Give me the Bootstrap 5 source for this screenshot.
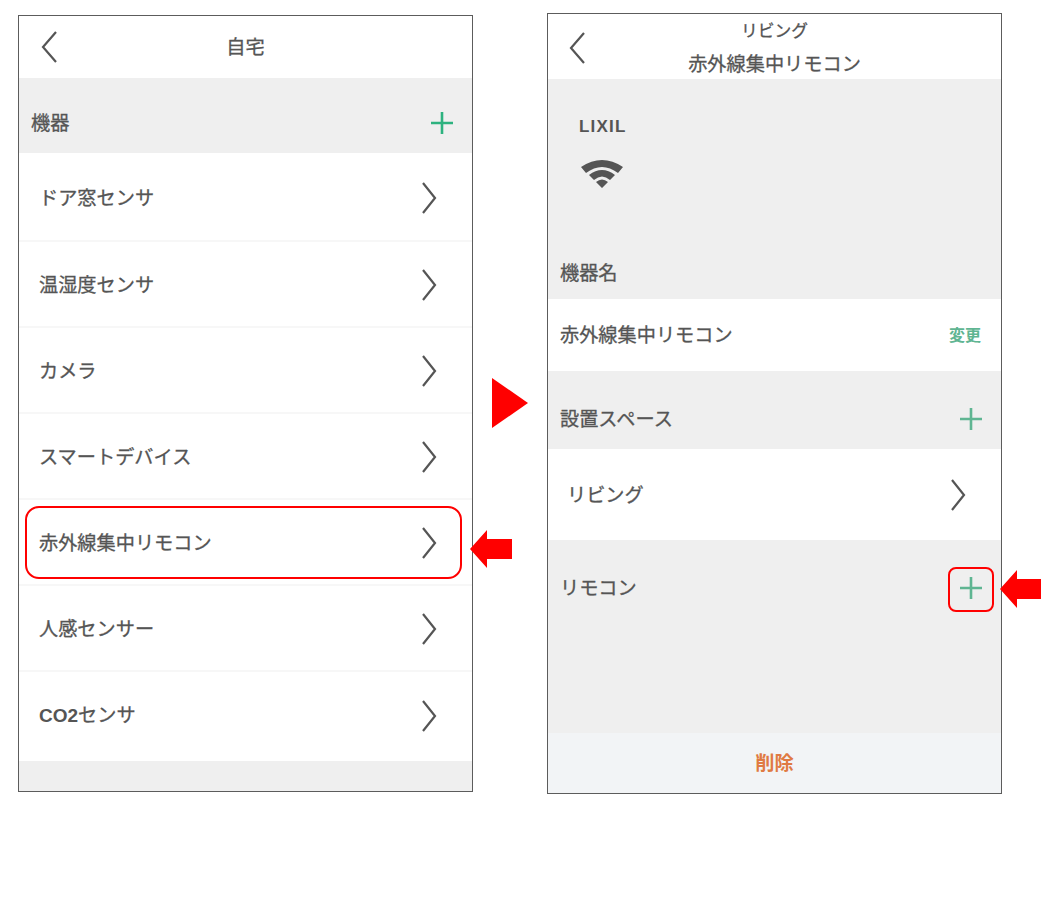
<!DOCTYPE html>
<html lang="ja">
<head>
<meta charset="utf-8">
<title>リモコン</title>
<link href="https://cdn.jsdelivr.net/npm/bootstrap@5.3.0/dist/css/bootstrap.min.css" rel="stylesheet">
<style>
html,body{height:906px;overflow:hidden;background:#fff}
body{font-family:"Noto Sans CJK JP","Liberation Sans",sans-serif;color:#555;font-size:19.2px;line-height:1.2;font-weight:400;-webkit-text-stroke:.3px #555}
.stage{position:relative;width:1058px;height:906px;align-items:flex-start}
.left-col{width:455px;height:777px;margin-top:15px;margin-left:18px;flex:none}
.right-col{width:455px;height:781px;margin-top:13px;flex:none}
.phone{border:1px solid #5c5c5c;background:#fff}
.mid-col{width:74px;flex:none;padding-top:378px;padding-left:19px}
.tri{width:0;height:0;border-top:25.5px solid transparent;border-bottom:25.5px solid transparent;border-left:36px solid #f00}
.hdr-l{height:62px}
.hdr-r{height:65px;background:#fff;position:relative}
.back{position:absolute;left:22px;top:14px}
.hdr-r .back{left:21px;top:17px}
.sub{font-size:16.8px;line-height:20px;margin-top:6px}
.ttl2{line-height:24px;margin-top:11px}
.sec{background:#efefef}
.sec-top{height:75px;padding:14px 19px 0 12px}
.rowitem{height:86px;padding:2px 35px 0 20px;border-bottom:2px solid #f7f7f7}
.rowitem.firstrow{height:89px}
.rowitem.lastrow{height:89px;border-bottom:0;padding:0 35px 2px 20px}
.chev{stroke:#555;stroke-width:2.2;fill:none}
.bold-co{font-family:"Liberation Sans",sans-serif;font-weight:700;font-size:19px;-webkit-text-stroke:0}
.info{height:220px;padding-left:12px}
.lixil{font-family:"Liberation Sans",sans-serif;font-weight:700;font-size:17px;letter-spacing:1.2px;padding-left:19px;padding-top:38px;line-height:20px;-webkit-text-stroke:0}
.wifi{display:block;margin-left:21px;margin-top:21px}
.info-name{margin-top:auto;height:49px;line-height:44px}
.name-row{height:72px;padding:0 20px 0 12px}
.chg{font-size:16px;color:#5fb592;font-weight:700;-webkit-text-stroke:0}
.sec-2{height:78px;padding:17px 19px 0 12px}
.space-row{height:91px;padding:0 35px 0 19px}
.remo{height:193px;padding:0 19px 0 12px}
.remo-in{height:95px}
.del{background:#f2f4f6;color:#e07a42;font-weight:700;-webkit-text-stroke:0}
.hl-row{position:absolute;left:25px;top:506px;width:437px;height:73px;border:2px solid #f00;border-radius:14px}
.hl-plus{position:absolute;left:948px;top:567px;width:46px;height:45px;border:2px solid #f00;border-radius:8px}
.arrow{position:absolute;display:block}
.arr-a{left:470px;top:530px}
.arr-b{left:1000px;top:570px}
</style>
</head>
<body class="m-0">
<div class="stage d-flex">
  <div class="left-col phone d-flex flex-column">
    <div class="hdr-l position-relative d-flex align-items-center justify-content-center">
      <svg class="back" width="18" height="34" viewBox="0 0 18 34"><path class="chev" d="M15 2 2 17 15 32"/></svg>
      <span>自宅</span>
    </div>
    <div class="sec sec-top d-flex align-items-center justify-content-between">
      <span>機器</span>
      <svg width="22" height="22" viewBox="0 0 22 22"><path d="M11 0V22M0 11H22" stroke="#2db27f" stroke-width="2.6"/></svg>
    </div>
    <div class="rowitem firstrow d-flex align-items-center justify-content-between"><span>ドア窓センサ</span><svg width="16" height="32" viewBox="0 0 16 32"><path class="chev" d="M2 1 14 16 2 31"/></svg></div>
    <div class="rowitem d-flex align-items-center justify-content-between"><span>温湿度センサ</span><svg width="16" height="32" viewBox="0 0 16 32"><path class="chev" d="M2 1 14 16 2 31"/></svg></div>
    <div class="rowitem d-flex align-items-center justify-content-between"><span>カメラ</span><svg width="16" height="32" viewBox="0 0 16 32"><path class="chev" d="M2 1 14 16 2 31"/></svg></div>
    <div class="rowitem d-flex align-items-center justify-content-between"><span>スマートデバイス</span><svg width="16" height="32" viewBox="0 0 16 32"><path class="chev" d="M2 1 14 16 2 31"/></svg></div>
    <div class="rowitem d-flex align-items-center justify-content-between"><span>赤外線集中リモコン</span><svg width="16" height="32" viewBox="0 0 16 32"><path class="chev" d="M2 1 14 16 2 31"/></svg></div>
    <div class="rowitem d-flex align-items-center justify-content-between"><span>人感センサー</span><svg width="16" height="32" viewBox="0 0 16 32"><path class="chev" d="M2 1 14 16 2 31"/></svg></div>
    <div class="rowitem lastrow d-flex align-items-center justify-content-between"><span><span class="bold-co">CO2</span>センサ</span><svg width="16" height="32" viewBox="0 0 16 32"><path class="chev" d="M2 1 14 16 2 31"/></svg></div>
    <div class="sec flex-grow-1"></div>
  </div>

  <div class="mid-col"><div class="tri"></div></div>

  <div class="right-col phone d-flex flex-column">
    <div class="hdr-r text-center">
      <svg class="back" width="18" height="34" viewBox="0 0 18 34"><path class="chev" d="M15 2 2 17 15 32"/></svg>
      <div class="sub">リビング</div>
      <div class="ttl2">赤外線集中リモコン</div>
    </div>
    <div class="sec info d-flex flex-column">
      <div class="lixil">LIXIL</div>
      <svg class="wifi" width="42" height="30" viewBox="0 0 42 30"><path d="M0 9Q21-5 42 9L37 15Q21 3 5 15Z M8 17Q21 7 34 17L29 22Q21 15 13 22Z M15 24Q21 19 27 24L21 30Z" fill="#555"/></svg>
      <div class="info-name">機器名</div>
    </div>
    <div class="name-row d-flex align-items-center justify-content-between"><span>赤外線集中リモコン</span><span class="chg">変更</span></div>
    <div class="sec sec-2 d-flex align-items-center justify-content-between"><span>設置スペース</span><svg width="22" height="22" viewBox="0 0 22 22"><path d="M11 0V22M0 11H22" stroke="#5fb592" stroke-width="2.6"/></svg></div>
    <div class="space-row d-flex align-items-center justify-content-between"><span>リビング</span><svg width="16" height="32" viewBox="0 0 16 32"><path class="chev" d="M2 1 14 16 2 31"/></svg></div>
    <div class="sec remo"><div class="remo-in d-flex align-items-center justify-content-between"><span>リモコン</span><svg width="22" height="22" viewBox="0 0 22 22"><path d="M11 0V22M0 11H22" stroke="#5fb592" stroke-width="2.6"/></svg></div></div>
    <div class="del flex-grow-1 d-flex align-items-center justify-content-center">削除</div>
  </div>

  <div class="hl-row"></div>
  <div class="hl-plus"></div>
  <svg class="arrow arr-a" width="42" height="38" viewBox="0 0 42 38"><path d="M0 19 17 0V9H42V29H17V38Z" fill="#f00"/></svg>
  <svg class="arrow arr-b" width="41" height="38" viewBox="0 0 41 38"><path d="M0 19 17 0V9H41V29H17V38Z" fill="#f00"/></svg>
</div>
</body>
</html>
